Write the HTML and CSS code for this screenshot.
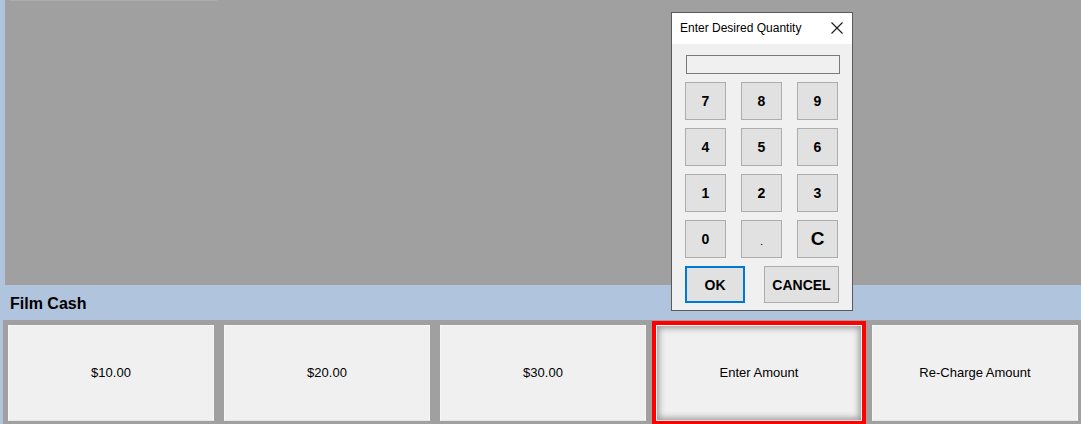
FILE: index.html
```html
<!DOCTYPE html>
<html lang="en">
<head>
    <meta charset="UTF-8">
    <meta name="viewport" content="width=device-width, initial-scale=1.0">
    <title>Film Cash</title>
    <link rel="stylesheet" href="styles.css">
</head>
<body>
    <div class="screen">
        <div class="display">
            <div class="display-edge"></div>
        </div>
        <div class="group-title">Film Cash</div>
        <div class="tiles">
            <button class="tile">$10.00</button>
            <button class="tile">$20.00</button>
            <button class="tile">$30.00</button>
            <button class="tile selected">Enter Amount</button>
            <button class="tile">Re-Charge Amount</button>
        </div>
    </div>

    <div class="dialog">
        <div class="dialog-title">
            <span>Enter Desired Quantity</span>
            <svg class="close" width="12" height="12" viewBox="0 0 12 12">
                <path d="M0.5 0.5 L11.5 11.5 M11.5 0.5 L0.5 11.5" stroke="#1a1a1a" stroke-width="1.1" fill="none"/>
            </svg>
        </div>
        <div class="dialog-body">
            <input type="text" class="qty" id="qty">
            <div class="pad">
                <button class="key">7</button>
                <button class="key">8</button>
                <button class="key">9</button>
                <button class="key">4</button>
                <button class="key">5</button>
                <button class="key">6</button>
                <button class="key">1</button>
                <button class="key">2</button>
                <button class="key">3</button>
                <button class="key">0</button>
                <button class="key dot">.</button>
                <button class="key big">C</button>
            </div>
            <div class="actions">
                <button class="act ok">OK</button>
                <button class="act cancel">CANCEL</button>
            </div>
        </div>
    </div>
</body>
</html>
```

FILE: styles.css
```css
body {
    margin: 0;
    background-color: #b0c4de;
    font-family: "Liberation Sans", Arial, sans-serif;
    height: 424px;
    overflow: hidden;
}
.screen {
    padding-left: 5px;
}
.display {
    height: 285px;
    background-color: #a0a0a0;
}
.display-edge {
    margin-left: 4px;
    width: 208px;
    height: 1px;
    background-color: #acacac;
}
.group-title {
    height: 33px;
    line-height: 33px;
    padding-top: 2px;
    padding-left: 5px;
    font-size: 16px;
    font-weight: bold;
    color: #000;
}
.tiles {
    margin-left: -2px;
    display: flex;
    gap: 10px;
    padding: 5px 3px 3px 5px;
    background-color: #a0a0a0;
}
.tile {
    flex: 1;
    height: 96px;
    border: 1px solid #f6f6f6;
    border-bottom-color: #e4e4e4;
    background-color: #f0f0f0;
    font-family: "Liberation Sans", Arial, sans-serif;
    font-size: 13px;
    color: #000;
    padding: 0 0 2px 0;
}
.tile.selected {
    outline: 4px solid #ff0000;
    outline-offset: 0;
    box-shadow: inset 0 0 6px 2px #9a9a9a;
}
.dialog {
    position: absolute;
    left: 671px;
    top: 12px;
    width: 180px;
    height: 297px;
    border: 1px solid #5a5a5a;
    background-color: #f0f0f0;
}
.dialog-title {
    height: 31px;
    background-color: #fff;
    display: flex;
    align-items: center;
    justify-content: space-between;
    padding: 0 9px 2px 8px;
    box-sizing: border-box;
    font-size: 12px;
    color: #000;
}
.dialog-body {
    padding: 11px 13px 0 13px;
}
.qty {
    display: block;
    box-sizing: border-box;
    width: 154px;
    height: 19px;
    margin-left: 1px;
    border: 1px solid #7a7a7a;
    background-color: #f0f0f0;
    padding: 0;
}
.pad {
    display: grid;
    grid-template-columns: 41px 41px 41px;
    grid-auto-rows: 38px;
    column-gap: 15px;
    row-gap: 8px;
    margin-top: 8px;
}
.key, .act {
    border: 1px solid #adadad;
    background-color: #e1e1e1;
    font-family: "Liberation Sans", Arial, sans-serif;
    font-weight: bold;
    font-size: 14px;
    color: #000;
    padding: 0;
}
.key.big {
    font-size: 19px;
}
.key.dot {
    font-size: 8px;
    padding-top: 6px;
}
.actions {
    display: flex;
    justify-content: space-between;
    margin-top: 8px;
    width: 154px;
}
.act {
    height: 37px;
}
.ok {
    width: 60px;
    border: 2px solid #0078d7;
}
.cancel {
    width: 75px;
}
```
